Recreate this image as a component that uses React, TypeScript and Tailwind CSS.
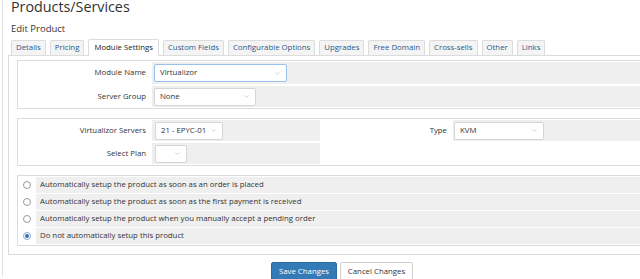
import { ChevronDown } from "lucide-react";

const tabs = [
  "Details",
  "Pricing",
  "Module Settings",
  "Custom Fields",
  "Configurable Options",
  "Upgrades",
  "Free Domain",
  "Cross-sells",
  "Other",
  "Links",
];

const options = [
  "Automatically setup the product as soon as an order is placed",
  "Automatically setup the product as soon as the first payment is received",
  "Automatically setup the product when you manually accept a pending order",
  "Do not automatically setup this product",
];

function Select({ value, width, focus }: { value: string; width: string; focus?: boolean }) {
  return (
    <div
      className={`flex h-[18px] items-center justify-between rounded-[2px] border bg-white pl-[5px] pr-[5px] text-[7.8px] text-[#333] ${width} ${
        focus ? "border-[#9cc0ec]" : "border-[#d5d5d5]"
      }`}
    >
      <span>{value}</span>
      <ChevronDown className="h-[7px] w-[7px] text-[#999]" strokeWidth={1.5} />
    </div>
  );
}

function Label({ children, w = "w-[131px]" }: { children: string; w?: string }) {
  return (
    <div className={`flex ${w} shrink-0 items-center justify-end bg-white pr-[4px] text-[7.8px] text-[#333]`}>{children}</div>
  );
}

export default function App() {
  return (
    <div className="h-[279px] w-[640px] overflow-hidden bg-white" style={{ fontFamily: '"Open Sans", sans-serif' }}>
      <div className="ml-[2px] h-full border-l border-[#e3e3e3] pl-[5px]">
        <h1 className="-mt-[2px] pl-[3px] text-[14.3px] leading-[17px] text-[#333]">Products/Services</h1>
        <h2 className="mt-[8px] pl-[3px] text-[9.5px] leading-[12px] text-[#333]">Edit Product</h2>

        <div className="mt-[5px] flex h-[16px] items-end gap-[4px] border-b border-[#dcdcdc] pl-[3px]">
          {tabs.map((t) =>
            t === "Module Settings" ? (
              <div
                key={t}
                className="-mb-px flex h-[17px] items-center rounded-t-[2px] border border-b-0 border-[#dcdcdc] bg-white px-[5px] text-[7.8px] text-[#222]"
              >
                {t}
              </div>
            ) : (
              <div
                key={t}
                className="flex h-[15px] items-center rounded-t-[2px] border border-b-0 border-[#dcdcdc] bg-[#f4f4f4] px-[4px] text-[7.8px] text-[#2b5987]"
              >
                {t}
              </div>
            )
          )}
        </div>

        <div className="w-[680px] border-l border-b border-[#dcdcdc] px-[8px] pb-[8px] pt-[4px]">
          <div className="flex flex-col gap-[2px] border border-[#dcdcdc] p-[1px]">
            <div className="flex h-[22px] gap-[2px]">
              <Label>Module Name</Label>
              <div className="flex flex-1 items-center bg-[#efefef] pl-[2px]">
                <Select value="Virtualizor" width="w-[133px]" focus />
              </div>
            </div>
            <div className="flex h-[21px] gap-[2px]">
              <Label>Server Group</Label>
              <div className="flex flex-1 items-center bg-[#efefef] pl-[2px]">
                <Select value="None" width="w-[102px]" />
              </div>
            </div>
          </div>

          <div className="mt-[9px] flex flex-col gap-[2px] border border-[#dcdcdc] p-[1px]">
            <div className="flex h-[21px] gap-[2px]">
              <Label>Virtualizor Servers</Label>
              <div className="flex w-[168px] shrink-0 items-center bg-[#efefef] pl-[3px]">
                <Select value="21 - EPYC-01" width="w-[68px]" />
              </div>
              <Label w="w-[129px]">Type</Label>
              <div className="flex flex-1 items-center bg-[#efefef] pl-[1px]">
                <Select value="KVM" width="w-[90px]" />
              </div>
            </div>
            <div className="flex h-[21px] gap-[2px]">
              <Label>Select Plan</Label>
              <div className="flex w-[168px] shrink-0 items-center bg-[#efefef] pl-[3px]">
                <Select value="" width="w-[32px]" />
              </div>
              <div className="flex-1 bg-white" />
            </div>
          </div>

          <div className="mt-[9px] flex flex-col gap-[1px] border border-[#dcdcdc] p-[1px]">
            {options.map((o, i) => (
              <div key={o} className="flex h-[16px] gap-[1px]">
                <div className="flex w-[16px] shrink-0 items-center justify-center bg-white">
                  {i === 3 ? (
                    <span className="flex h-[8px] w-[8px] items-center justify-center rounded-full border border-[#8aa9cc] bg-white">
                      <span className="h-[4px] w-[4px] rounded-full bg-[#3a6fb0]" />
                    </span>
                  ) : (
                    <span className="h-[8px] w-[8px] rounded-full border border-[#9a9a9a] bg-white" />
                  )}
                </div>
                <div className="flex flex-1 items-center bg-[#efefef] pl-[4px] text-[7.8px] text-[#333]">{o}</div>
              </div>
            ))}
          </div>
        </div>

        <div className="mt-[7px] flex gap-[3px] pl-[263px]">
          <div className="flex h-[20px] w-[66px] items-center justify-center rounded-[2px] border border-[#2e6da4] bg-[#337ab7] text-[7.8px] text-white">
            Save Changes
          </div>
          <div className="flex h-[20px] w-[73px] items-center justify-center rounded-[2px] border border-[#d0d0d0] bg-white text-[7.8px] text-[#333]">
            Cancel Changes
          </div>
        </div>
      </div>
    </div>
  );
}
